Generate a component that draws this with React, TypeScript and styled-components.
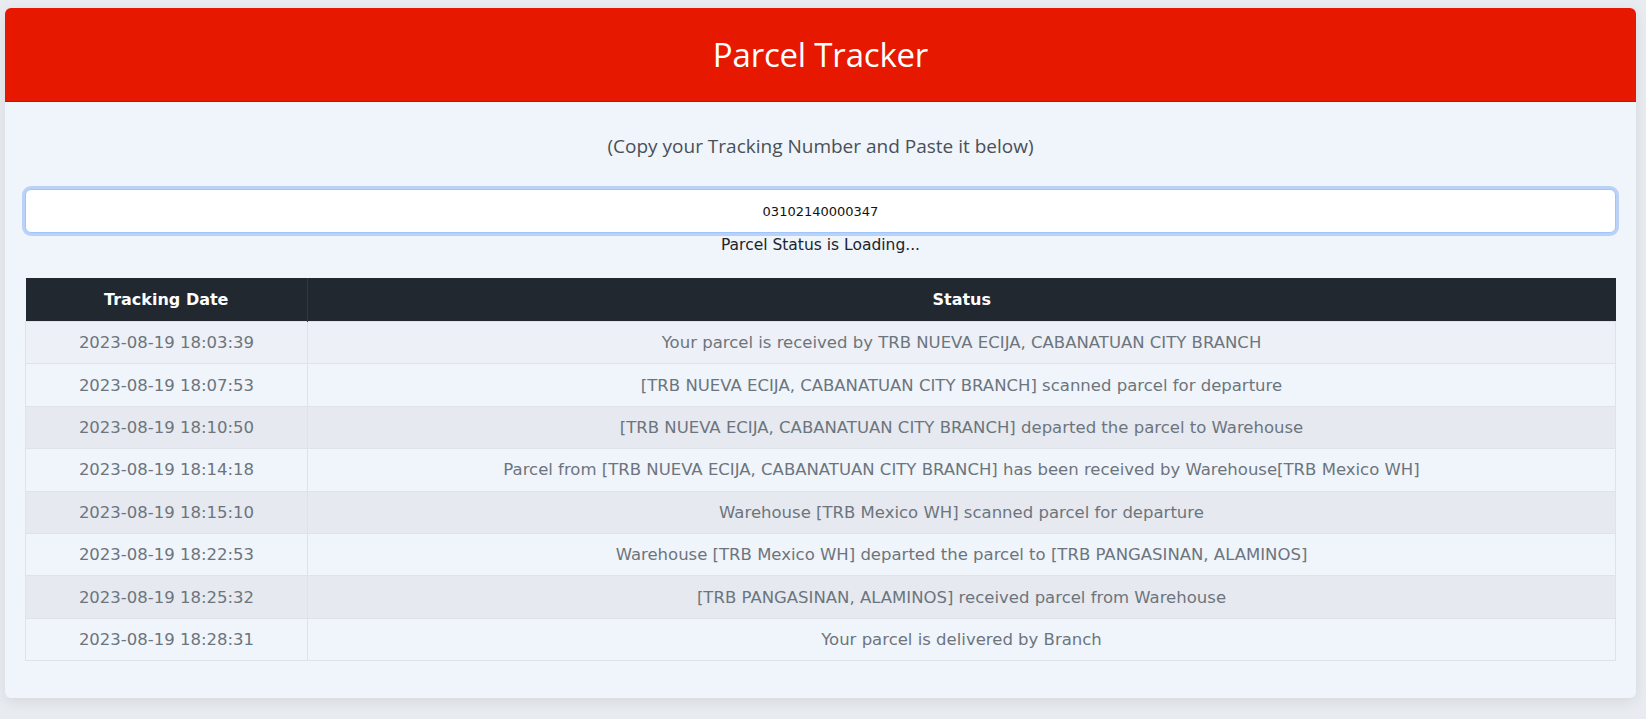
import React from 'react'
import styled, { createGlobalStyle } from 'styled-components'

const GlobalStyle = createGlobalStyle`
  html, body {
    margin: 0;
    padding: 0;
    background: #e8ebf0;
  }
  body {
    font-family: 'DejaVu Sans', Verdana, sans-serif;
  }
`

const Page = styled.div`
  padding: 8px 10px 22px 5px;
`

const Card = styled.div`
  background: #f0f4fb;
  border-radius: 6px;
  box-shadow: 0 4px 14px rgba(0, 0, 0, 0.08);
  overflow: hidden;
`

const Header = styled.header`
  height: 94px;
  background: #e71800;
  display: flex;
  align-items: center;
  justify-content: center;
  border-bottom: 1px solid #c41400;
  box-sizing: border-box;
`

const Title = styled.h1`
  margin: 0;
  font-family: 'Open Sans', 'Noto Sans', sans-serif;
  font-weight: 400;
  font-size: 33px;
  color: #ffffff;
  letter-spacing: -0.2px;
`

const Body = styled.div`
  padding: 29px 20px 37px;
  display: flex;
  flex-direction: column;
`

const Hint = styled.p`
  margin: 0;
  text-align: center;
  font-family: 'Open Sans', 'Noto Sans', sans-serif;
  font-size: 19px;
  line-height: 30px;
  color: #495057;
`

const TrackInput = styled.input`
  margin-top: 28px;
  height: 44px;
  box-sizing: border-box;
  width: 100%;
  border: 1px solid #9ec5fe;
  border-radius: 6px;
  box-shadow: 0 0 0 3px #bad2f7;
  background: #ffffff;
  outline: none;
  text-align: center;
  font-family: 'DejaVu Sans', Verdana, sans-serif;
  font-size: 13px;
  color: #111;
  caret-color: #000;
`

const LoadingNote = styled.div`
  margin-top: 2px;
  text-align: center;
  font-size: 15.5px;
  line-height: 20px;
  color: #212529;
`

const Table = styled.table`
  margin-top: 23px;
  width: 100%;
  border-collapse: collapse;
  table-layout: fixed;
  font-size: 16.5px;
`

const HeadCell = styled.th`
  height: 43px;
  padding: 0 8px;
  background: #212830;
  color: #ffffff;
  font-weight: 700;
  font-size: 16px;
  text-align: center;
  border-left: 1px solid #323942;
  &:first-child {
    border-left: none;
  }
`

const Row = styled.tr<{ $shade: 'light' | 'mid' | 'dark' }>`
  height: 42.4px;
  background: ${(p) =>
    p.$shade === 'dark' ? '#e6e9ef' : p.$shade === 'mid' ? '#edf0f6' : '#f0f4fb'};
`

const Cell = styled.td`
  padding: 0 8px;
  text-align: center;
  color: #6c757d;
  border: 1px solid #dfe3e8;
  white-space: nowrap;
`

const events: [string, string][] = [
  ['2023-08-19 18:03:39', 'Your parcel is received by TRB NUEVA ECIJA, CABANATUAN CITY BRANCH'],
  ['2023-08-19 18:07:53', '[TRB NUEVA ECIJA, CABANATUAN CITY BRANCH] scanned parcel for departure'],
  ['2023-08-19 18:10:50', '[TRB NUEVA ECIJA, CABANATUAN CITY BRANCH] departed the parcel to Warehouse'],
  ['2023-08-19 18:14:18', 'Parcel from [TRB NUEVA ECIJA, CABANATUAN CITY BRANCH] has been received by Warehouse[TRB Mexico WH]'],
  ['2023-08-19 18:15:10', 'Warehouse [TRB Mexico WH] scanned parcel for departure'],
  ['2023-08-19 18:22:53', 'Warehouse [TRB Mexico WH] departed the parcel to [TRB PANGASINAN, ALAMINOS]'],
  ['2023-08-19 18:25:32', '[TRB PANGASINAN, ALAMINOS] received parcel from Warehouse'],
  ['2023-08-19 18:28:31', 'Your parcel is delivered by Branch'],
]

export default function App() {
  return (
    <>
      <GlobalStyle />
      <Page>
        <Card>
          <Header>
            <Title>Parcel Tracker</Title>
          </Header>
          <Body>
            <Hint>(Copy your Tracking Number and Paste it below)</Hint>
            <TrackInput defaultValue="03102140000347" autoFocus />
            <LoadingNote>Parcel Status is Loading...</LoadingNote>
            <Table>
              <colgroup>
                <col style={{ width: 282 }} />
                <col />
              </colgroup>
              <thead>
                <tr>
                  <HeadCell>Tracking Date</HeadCell>
                  <HeadCell>Status</HeadCell>
                </tr>
              </thead>
              <tbody>
                {events.map(([date, status], i) => (
                  <Row key={date} $shade={i === 0 ? 'mid' : i % 2 === 0 ? 'dark' : 'light'}>
                    <Cell>{date}</Cell>
                    <Cell>{status}</Cell>
                  </Row>
                ))}
              </tbody>
            </Table>
          </Body>
        </Card>
      </Page>
    </>
  )
}
